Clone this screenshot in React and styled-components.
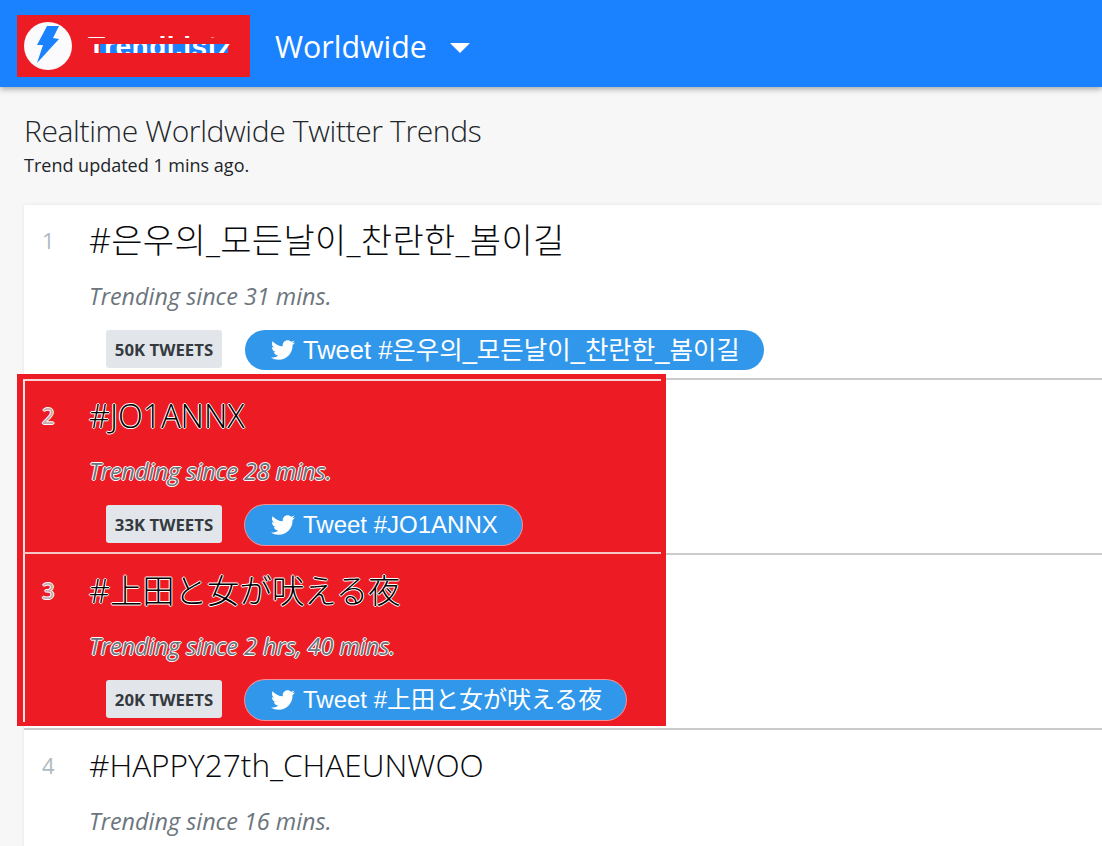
import * as React from "react"
import styled, { createGlobalStyle, css } from "styled-components"
import { FaTwitter } from "react-icons/fa"

const halo = css`
  text-shadow: 1px 0 0 #fff, -1px 0 0 #fff, 0 1px 0 #fff, 0 -1px 0 #fff;
`

const GlobalStyle = createGlobalStyle`
  html, body {
    margin: 0;
    height: 846px;
    overflow: hidden;
    background: #f7f7f7;
    font-family: "Open Sans", "Noto Sans", sans-serif;
    color: #212529;
  }
`

const Navbar = styled.header`
  position: relative;
  z-index: 3;
  height: 87px;
  background: #1a82ff;
  box-shadow: 0 2px 6px rgba(0, 0, 0, 0.35);
  display: flex;
  align-items: center;
  padding: 5px 0 0 17px;
  box-sizing: border-box;
`

const Brand = styled.div`
  width: 233px;
  height: 62px;
  background: #ed1c24;
  display: flex;
  align-items: center;
  padding-left: 7px;
  box-sizing: border-box;
  gap: 16px;
`

const BrandMark = styled.svg`
  width: 48px;
  height: 48px;
  flex: none;
`

const BrandWord = styled.div`
  position: relative;
  width: 145px;
  height: 33px;
  font-family: "Liberation Sans", sans-serif;
  font-size: 28px;
  font-weight: 700;
  letter-spacing: 0.5px;
  line-height: 33px;
  color: #fff;
  white-space: nowrap;

  &::before {
    content: "";
    position: absolute;
    left: 12px;
    right: 5px;
    top: 14px;
    height: 9px;
    background: #1a82ff;
  }

  &::after {
    content: "";
    position: absolute;
    inset: 0;
    background: linear-gradient(
      #ed1c24 0 5px,
      transparent 5px 8px,
      #ed1c24 8px 14px,
      transparent 14px 23px,
      #ed1c24 23px
    );
  }

  span {
    position: relative;
  }
`

const Location = styled.div`
  margin-left: 25px;
  font-size: 30.4px;
  color: #fff;
  display: flex;
  align-items: center;
  gap: 23px;
`

const Caret = styled.span`
  border-left: 10px solid transparent;
  border-right: 10px solid transparent;
  border-top: 10px solid #fff;
  margin-top: 4px;
`

const Main = styled.main`
  height: 759px;
  box-sizing: border-box;
  overflow: hidden;
  padding: 25px 0 0 24px;
`

const Title = styled.h1`
  margin: 0;
  font-size: 30px;
  line-height: 38px;
  font-weight: 300;
  letter-spacing: -0.37px;
  color: #212529;
`

const Updated = styled.p`
  margin: 3px 0 0;
  font-size: 18px;
  line-height: 24px;
`

const TrendList = styled.ol`
  position: relative;
  list-style: none;
  margin: 28px 0 0;
  padding: 0;
  background: #fff;
  box-shadow: 0 0 4px rgba(0, 0, 0, 0.08);
`

const Redaction = styled.div`
  position: absolute;
  left: -7px;
  top: 169px;
  width: 649px;
  height: 352px;
  background: #ed1c24;
  z-index: 1;

  &::before {
    content: "";
    position: absolute;
    left: 6px;
    top: 5px;
    right: 5px;
    bottom: 4px;
    border-left: 2px solid #fbe3e4;
    border-top: 2px solid #f8d4d6;
  }

  &::after {
    content: "";
    position: absolute;
    left: 6px;
    right: 5px;
    top: 178px;
    height: 2px;
    background: #f5c4c6;
  }
`

const Row = styled.li`
  height: 175px;
  box-sizing: border-box;
  border-bottom: 2px solid #cbcbcb;
  display: flex;
  padding: 14px 0 0 18px;
`

const Rank = styled.div`
  position: relative;
  z-index: 2;
  width: 47px;
  flex: none;
  font-size: 22px;
  line-height: 42px;
  color: ${(p) => (p.$masked ? "#c9a7ac" : "#adbac2")};
  ${(p) => p.$masked && halo}
`

const Body = styled.div`
  position: relative;
  z-index: 2;
`

const Tag = styled.div`
  font-family: "Open Sans", "Noto Sans CJK KR", sans-serif;
  font-size: ${(p) => (p.$hangul ? "34px" : p.$masked ? "32.4px" : "31.6px")};
  letter-spacing: ${(p) => (p.$hangul ? "0.3px" : "0")};
  line-height: 42px;
  font-weight: 300;
  white-space: nowrap;
  color: ${(p) => (p.$masked ? "#000" : "#08090c")};
  ${(p) => p.$masked && halo}
`

const Since = styled.div`
  margin-top: 20px;
  font-size: 23.4px;
  line-height: 30px;
  font-style: italic;
  color: #6c757d;
  ${(p) => p.$masked && halo}
`

const Actions = styled.div`
  margin: 19px 0 0 17px;
  display: flex;
  align-items: flex-start;
  gap: 23px;
`

const Count = styled.span`
  width: 116px;
  height: 38px;
  border-radius: 3px;
  background: #e2e6ea;
  color: #343a40;
  font-size: 16.8px;
  font-weight: 700;
  white-space: nowrap;
  display: flex;
  align-items: center;
  justify-content: center;
`

const TweetButton = styled.a`
  height: 40px;
  line-height: 38px;
  padding: 0 24px 0 26px;
  border-radius: 20px;
  background: #3197ea;
  color: #fff;
  font-family: "Liberation Sans", "Noto Sans CJK KR", sans-serif;
  font-size: ${(p) => (p.$hangul ? "25.5px" : "24px")};
  display: flex;
  align-items: center;
  gap: 8px;
  white-space: nowrap;
  ${(p) => p.$masked && "box-shadow: 0 0 0 1px rgba(255, 255, 255, 0.5);"}

  svg {
    width: 24px;
    height: 24px;
  }
`

const trends = [
  { tag: "#은우의_모든날이_찬란한_봄이길", since: "31 mins.", count: "50K", hangul: true },
  { tag: "#JO1ANNX", since: "28 mins.", count: "33K", masked: true },
  { tag: "#上田と女が吠える夜", since: "2 hrs, 40 mins.", count: "20K", masked: true },
  { tag: "#HAPPY27th_CHAEUNWOO", since: "16 mins." },
]

const App = () => (
  <>
    <GlobalStyle />
    <Navbar>
      <Brand>
        <BrandMark viewBox="0 0 48 48">
          <circle cx="24" cy="24" r="24" fill="#fbfbfd" />
          <polygon
            points="23,4 35,4 29,16 35,17 13,41 19,23 13,23"
            fill="#1a82ff"
          />
        </BrandMark>
        <BrandWord>
          <span>Trendi.istz</span>
        </BrandWord>
      </Brand>
      <Location>
        Worldwide
        <Caret />
      </Location>
    </Navbar>
    <Main>
      <Title>Realtime Worldwide Twitter Trends</Title>
      <Updated>Trend updated 1 mins ago.</Updated>
      <TrendList>
        <Redaction />
        {trends.map((t, i) => (
          <Row key={t.tag}>
            <Rank $masked={t.masked}>{i + 1}</Rank>
            <Body>
              <Tag $masked={t.masked} $hangul={t.hangul}>
                {t.tag}
              </Tag>
              <Since $masked={t.masked}>Trending since {t.since}</Since>
              {t.count && (
                <Actions>
                  <Count>{t.count} TWEETS</Count>
                  <TweetButton $masked={t.masked} $hangul={t.hangul}>
                    <FaTwitter />
                    Tweet {t.tag}
                  </TweetButton>
                </Actions>
              )}
            </Body>
          </Row>
        ))}
      </TrendList>
    </Main>
  </>
)

export default App
